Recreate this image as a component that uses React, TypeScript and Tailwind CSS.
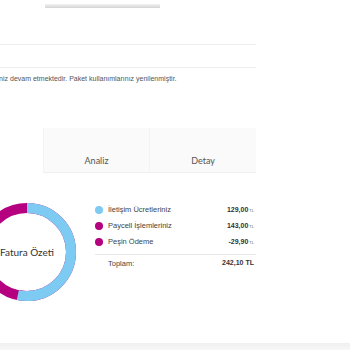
import React from 'react';

const ITEMS = [
  { label: 'İletişim Ücretleriniz', value: '129,00', color: 'bg-[#7dcbf3]' },
  { label: 'Paycell İşlemleriniz', value: '143,00', color: 'bg-[#b5007f]' },
  { label: 'Peşin Ödeme', value: '-29,90', color: 'bg-[#b5007f]' },
];

function Donut() {
  const r = 44;
  const c = 2 * Math.PI * r;
  const blue = (129 / 242.1) * c;
  return (
    <div className="relative w-[98px] h-[98px] shrink-0">
      <svg width="98" height="98" viewBox="0 0 98 98">
        <circle cx="49" cy="49" r={r} fill="none" stroke="#b5007f" strokeWidth="10" />
        <circle
          cx="49"
          cy="49"
          r={r}
          fill="none"
          stroke="#7dcbf3"
          strokeWidth="10"
          strokeDasharray={`${blue} ${c}`}
          transform="rotate(-90 49 49)"
        />
      </svg>
      <div className="absolute inset-0 flex items-center justify-center text-[10px] text-[#333] font-['Lato',sans-serif]">
        Fatura Özeti
      </div>
    </div>
  );
}

export default function App() {
  return (
    <div className="w-[350px] h-[350px] overflow-hidden bg-white flex flex-col">
      <div className="ml-[-64px] w-[320px] shrink-0 flex flex-col">
        {/* top */}
        <div className="h-[44px]">
          <div className="mt-[4px] ml-[109px] w-[115px] h-[4px] bg-linear-to-b from-[#f3f3f3] to-[#d4d4d4]"></div>
        </div>
        <div className="h-[23px] border-t border-[#eeeeee]"></div>
        <div className="h-[61px] border-t border-[#eeeeee] pt-[6px]">
          <p className="ml-[46px] text-[7px] leading-[9px] text-[#555] whitespace-nowrap font-['Liberation_Sans',Arial,sans-serif]">
            Tarifeniz devam etmektedir. Paket kullanımlarınız yenilenmiştir.
          </p>
        </div>

        {/* tabs */}
        <div className="grid grid-cols-3 h-[45px] font-['Lato',sans-serif] text-[9px] text-[#555]">
          <div className="bg-white flex items-end justify-center pb-[5px]">Özet</div>
          <div className="bg-[#fafafa] border-l border-[#f3f3f3] border-b border-b-[#f0f0f0] flex items-end justify-center pb-[5px]">
            Analiz
          </div>
          <div className="bg-[#fafafa] border-l border-[#f3f3f3] border-b border-b-[#f0f0f0] flex items-end justify-center pb-[5px]">
            Detay
          </div>
        </div>

        {/* summary */}
        <div className="mt-[30px] flex">
          <div className="ml-[42px]">
            <Donut />
          </div>
          <div className="ml-[19px] mt-[-1px] w-[166px] font-['Liberation_Sans',Arial,sans-serif] text-[7.5px] text-[#444]">
            {ITEMS.map((item) => (
              <div key={item.label} className="h-[16px] flex items-center">
                <span className={`w-[8px] h-[8px] rounded-full ${item.color}`}></span>
                <span className="ml-[5px] flex-1">{item.label}</span>
                <span className="pr-[2px] text-[7px] font-bold text-[#333]">
                  {item.value}
                  <span className="ml-[1px] text-[4px] font-normal text-[#666]">TL</span>
                </span>
              </div>
            ))}
            <div className="mt-[4px] border-t border-[#e8e8e8] h-[18px] flex items-center">
              <span className="ml-[13px] flex-1">Toplam:</span>
              <span className="pr-[2px] text-[7px] font-bold text-[#333]">242,10 TL</span>
            </div>
          </div>
        </div>
      </div>

      <div className="mt-auto h-[7px] bg-linear-to-b from-[#f0f0f0] to-[#f7f7f7]"></div>
    </div>
  );
}
